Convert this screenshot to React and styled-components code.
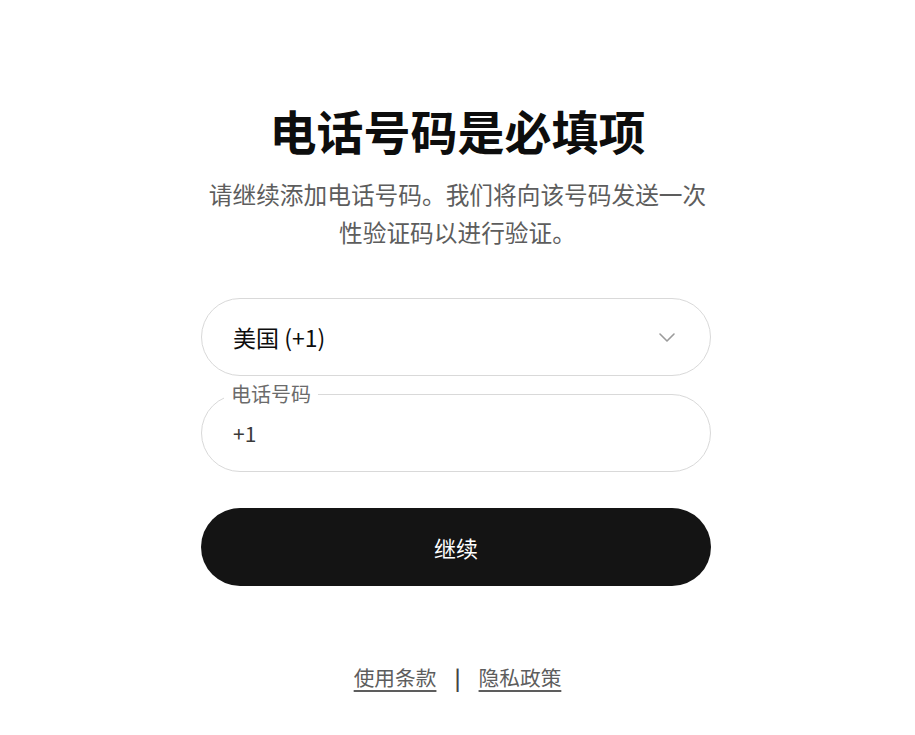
import styled, { createGlobalStyle } from 'styled-components';

const GlobalStyle = createGlobalStyle`
  html, body {
    margin: 0;
    padding: 0;
    background: #fff;
  }
  body {
    font-family: "Noto Sans CJK SC", "Noto Sans", sans-serif;
    color: #0d0d0d;
  }
`;

const Page = styled.main`
  display: flex;
  flex-direction: column;
  align-items: center;
  padding-top: 100px;
`;

const Title = styled.h1`
  margin: 0;
  font-size: 47px;
  line-height: 60px;
  font-weight: 700;
  color: #0d0d0d;
`;

const Subtitle = styled.p`
  margin: 15px 0 0;
  width: 510px;
  text-align: center;
  font-size: 23.7px;
  line-height: 38px;
  color: #5d5d5d;
`;

const Form = styled.div`
  width: 510px;
  margin: 47px 3px 0 0;
  display: flex;
  flex-direction: column;
`;

const Field = styled.div`
  position: relative;
  height: 78px;
  box-sizing: border-box;
  border: 1px solid #d9d9d9;
  border-radius: 39px;
  display: flex;
  align-items: center;
  justify-content: space-between;
  padding: 0 34px 0 31px;
  margin-top: ${(p) => p.$gap || 0}px;
`;

const Value = styled.span`
  font-size: ${(p) => (p.$muted ? '21px' : '23px')};
  color: ${(p) => (p.$muted ? '#3a3a3a' : '#0d0d0d')};
`;

const FloatLabel = styled.span`
  position: absolute;
  top: -15px;
  left: 22px;
  padding: 0 7px;
  background: #fff;
  font-size: 20px;
  line-height: 28px;
  color: #6b6b6b;
`;

const Button = styled.button`
  margin-top: 36px;
  height: 78px;
  border: none;
  border-radius: 39px;
  background: #141414;
  color: #fff;
  font-family: inherit;
  font-size: 22px;
  cursor: pointer;
`;

const Footer = styled.nav`
  margin-top: 76px;
  display: flex;
  align-items: center;
  gap: 18px;
  font-size: 20.7px;
  line-height: 30px;
  color: #5d5d5d;
`;

const Divider = styled.span`
  color: #444;
  font-weight: 700;
`;

const FooterLink = styled.a`
  color: #5d5d5d;
  text-decoration: underline;
  text-underline-offset: 4px;
`;

const Chevron = () => (
  <svg width="18" height="12" viewBox="0 0 18 12" fill="none">
    <polyline points="2,3 9,10 16,3" stroke="#9b9b9b" strokeWidth="1.6" strokeLinecap="round" strokeLinejoin="round" />
  </svg>
);

export default function App() {
  return (
    <>
      <GlobalStyle />
      <Page>
        <Title>电话号码是必填项</Title>
        <Subtitle>请继续添加电话号码。我们将向该号码发送一次性验证码以进行验证。</Subtitle>
        <Form>
          <Field>
            <Value>美国 (+1)</Value>
            <Chevron />
          </Field>
          <Field $gap={18}>
            <FloatLabel>电话号码</FloatLabel>
            <Value $muted>+1</Value>
          </Field>
          <Button>继续</Button>
        </Form>
        <Footer>
          <FooterLink>使用条款</FooterLink>
          <Divider>|</Divider>
          <FooterLink>隐私政策</FooterLink>
        </Footer>
      </Page>
    </>
  );
}
